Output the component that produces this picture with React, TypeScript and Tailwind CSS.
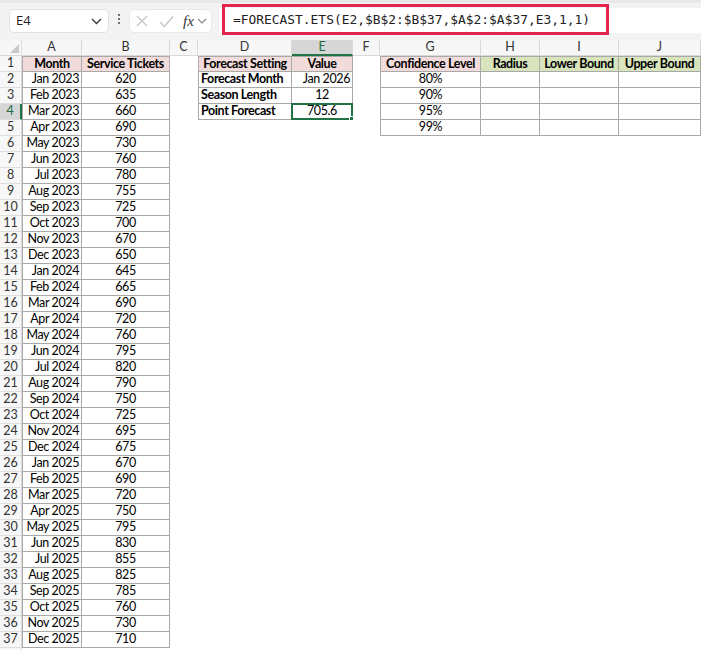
import React from "react";

const months = [
  ["Jan 2023", "620"], ["Feb 2023", "635"], ["Mar 2023", "660"], ["Apr 2023", "690"],
  ["May 2023", "730"], ["Jun 2023", "760"], ["Jul 2023", "780"], ["Aug 2023", "755"],
  ["Sep 2023", "725"], ["Oct 2023", "700"], ["Nov 2023", "670"], ["Dec 2023", "650"],
  ["Jan 2024", "645"], ["Feb 2024", "665"], ["Mar 2024", "690"], ["Apr 2024", "720"],
  ["May 2024", "760"], ["Jun 2024", "795"], ["Jul 2024", "820"], ["Aug 2024", "790"],
  ["Sep 2024", "750"], ["Oct 2024", "725"], ["Nov 2024", "695"], ["Dec 2024", "675"],
  ["Jan 2025", "670"], ["Feb 2025", "690"], ["Mar 2025", "720"], ["Apr 2025", "750"],
  ["May 2025", "795"], ["Jun 2025", "830"], ["Jul 2025", "855"], ["Aug 2025", "825"],
  ["Sep 2025", "785"], ["Oct 2025", "760"], ["Nov 2025", "730"], ["Dec 2025", "710"],
];

const cols = ["A", "B", "C", "D", "E", "F", "G", "H", "I", "J"];

type CellDef = {
  text?: string;
  align?: "l" | "c" | "r";
  bold?: boolean;
  bg?: string;
  table?: boolean;
  left?: boolean;
  top?: boolean;
  selected?: boolean;
};

function getCell(r: number, c: string): CellDef {
  if (c === "A" || c === "B") {
    if (r === 1) {
      return { text: c === "A" ? "Month" : "Service Tickets", align: "c", bold: true, bg: "pink", table: true, left: c === "A", top: true };
    }
    const m = months[r - 2];
    if (!m) return {};
    return { text: c === "A" ? m[0] : m[1], align: c === "A" ? "r" : "c", table: true, left: c === "A" };
  }
  if (c === "D" || c === "E") {
    if (r > 4) return {};
    if (r === 1) return { text: c === "D" ? "Forecast Setting" : "Value", align: "c", bold: true, bg: "pink", table: true, left: c === "D", top: true };
    const d: Record<number, [string, string, "l" | "c" | "r"]> = {
      2: ["Forecast Month", "Jan 2026", "r"],
      3: ["Season Length", "12", "c"],
      4: ["Point Forecast", "705.6", "c"],
    };
    const row = d[r];
    if (c === "D") return { text: row[0], align: "l", bold: true, table: true, left: true };
    return { text: row[1], align: row[2], table: true, selected: r === 4 };
  }
  if (["G", "H", "I", "J"].includes(c)) {
    if (r > 5) return {};
    if (r === 1) {
      const t: Record<string, string> = { G: "Confidence Level", H: "Radius", I: "Lower Bound", J: "Upper Bound" };
      return { text: t[c], align: "c", bold: true, bg: c === "G" ? "pink" : "green", table: true, left: c === "G", top: true };
    }
    const p = ["80%", "90%", "95%", "99%"];
    return { text: c === "G" ? p[r - 2] : "", align: "c", table: true, left: c === "G" };
  }
  return {};
}

function Cell({ r, c }: { r: number; c: string }) {
  const d = getCell(r, c);
  const cls = [
    "relative h-4 flex items-center overflow-visible whitespace-nowrap text-[12.5px] tracking-[-0.4px] leading-none text-black",
    d.table ? "border-r border-b border-[#a9a9a9]" : "",
    d.left ? "border-l" : "",
    d.top ? "border-t" : "",
    d.bg === "pink" ? "bg-[#f2dcdb]" : d.bg === "green" ? "bg-[#d8e4bc]" : "bg-white",
    d.bold ? "font-bold" : "",
    d.align === "c" ? "justify-center" : d.align === "r" ? "justify-end pr-[2px]" : "justify-start pl-[2px]",
  ].join(" ");
  return (
    <div className={cls}>
      {d.text}
      {d.selected && (
        <div className="absolute -left-[1px] -top-[1px] -right-[1px] -bottom-[1px] border-2 border-[#217346] pointer-events-none">
          <div className="absolute -right-[4px] -bottom-[4px] w-[6px] h-[6px] bg-[#217346] border border-white" />
        </div>
      )}
    </div>
  );
}

export default function App() {
  const rows = Array.from({ length: 38 }, (_, i) => i + 1);
  return (
    <div className="w-[701px] h-[650px] overflow-hidden bg-white" style={{ fontFamily: "Lato, 'Open Sans', sans-serif" }}>
      {/* Formula bar */}
      <div className="h-[40px] bg-[#f3f3f3] border-t-[3px] border-[#e8e8e8] flex items-start relative">
        <div className="mt-[6px] ml-[9px] w-[100px] h-[24px] bg-white border border-[#e1e1e1] rounded-[5px] flex items-center justify-between pl-[6px] pr-[6px]">
          <span className="text-[13px] text-[#222]" style={{ fontFamily: "'Open Sans', sans-serif" }}>E4</span>
          <svg width="11" height="7" viewBox="0 0 11 7"><path d="M1 1l4.5 4.5L10 1" stroke="#333" strokeWidth="1.3" fill="none" /></svg>
        </div>
        <div className="mt-[11px] ml-[8px] w-[4px] flex flex-col items-center gap-[2px]">
          <div className="w-[2px] h-[2px] bg-[#444] rounded-full" />
          <div className="w-[2px] h-[2px] bg-[#444] rounded-full" />
          <div className="w-[2px] h-[2px] bg-[#444] rounded-full" />
        </div>
        <div className="mt-[6px] ml-[8px] w-[83px] h-[24px] bg-white border border-[#e8e8e8] rounded-[5px] flex items-center pl-[5px]">
          <svg width="14" height="14" viewBox="0 0 14 14"><path d="M2 2l10 10M12 2L2 12" stroke="#c4c4c4" strokeWidth="1.3" fill="none" /></svg>
          <svg className="ml-[10px]" width="15" height="13" viewBox="0 0 15 13"><path d="M1 7l4.5 4.5L14 1.5" stroke="#c4c4c4" strokeWidth="1.3" fill="none" /></svg>
          <span className="ml-[9px] text-[15px] italic text-[#333]" style={{ fontFamily: "'Liberation Serif', serif" }}>fx</span>
          <svg className="ml-[3px]" width="10" height="6" viewBox="0 0 10 6"><path d="M1 1l4 4 4-4" stroke="#888" strokeWidth="1.2" fill="none" /></svg>
        </div>
        <div className="absolute left-[219px] top-[5px] right-0 h-[25px] bg-white" />
        <div className="absolute left-[222px] top-[1px] w-[387px] h-[31px] border-[3px] border-[#e3244e] flex items-center pl-[8px]">
          <span className="text-[12.9px] text-[#222] whitespace-nowrap" style={{ fontFamily: "'DejaVu Sans Mono', monospace" }}>
            =FORECAST.ETS(E2,$B$2:$B$37,$A$2:$A$37,E3,1,1)
          </span>
        </div>
      </div>

      {/* Sheet */}
      <div className="grid grid-cols-[22px_60px_88px_28px_94px_61px_27px_101px_59px_79px_82px]">
        <div className="h-4 bg-[#f7f7f7] border-r border-b border-[#d9d9d9] relative">
          <div className="absolute right-[2px] bottom-[2px] w-0 h-0 border-l-[9px] border-l-transparent border-b-[9px] border-b-[#c9c9c9]" />
        </div>
        {cols.map((c) => (
          <div
            key={c}
            className={
              "h-4 flex items-center justify-center text-[12.5px] leading-none border-r " +
              (c === "E"
                ? "bg-[#d6d6d6] text-[#1e6b3e] border-b-2 border-b-[#217346] border-r-[#d9d9d9]"
                : "bg-[#f7f7f7] text-[#333] border-b border-[#d9d9d9]")
            }
          >
            {c}
          </div>
        ))}
        {rows.map((r) => (
          <React.Fragment key={r}>
            <div
              className={
                "h-4 flex items-center justify-center text-[12.5px] leading-none border-b border-[#dedede] " +
                (r === 4
                  ? "bg-[#d6d6d6] text-[#1e6b3e] border-r-2 border-r-[#217346]"
                  : "bg-[#f7f7f7] text-[#333] border-r border-r-[#d9d9d9]")
              }
            >
              {r <= 37 ? r : ""}
            </div>
            {cols.map((c) => (
              <Cell key={c} r={r} c={c} />
            ))}
          </React.Fragment>
        ))}
      </div>
    </div>
  );
}
